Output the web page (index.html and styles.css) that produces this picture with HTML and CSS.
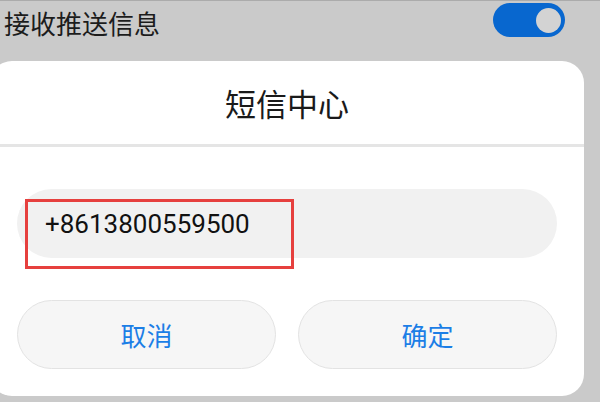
FILE: index.html
```html
<!DOCTYPE html>
<html lang="zh-CN">
	<head>
		<meta charset="utf-8">
		<title>短信中心</title>
		<link rel="stylesheet" href="styles.css">
	</head>
	<body>

		<div class="row">
			<span class="row-label">接收推送信息</span>
			<span class="switch on"><i class="knob"></i></span>
		</div>

		<div class="dialog">
			<div class="dialog-title">短信中心</div>
			<div class="dialog-body">
				<div class="field">
					<span class="field-text">+8613800559500</span>
					<span class="mark"></span>
				</div>
				<div class="actions">
					<a href="javascript:;" class="action">取消</a>
					<a href="javascript:;" class="action">确定</a>
				</div>
			</div>
		</div>

	</body>
</html>
```

FILE: styles.css
```css
html, body {
	height: 100%;
}
body {
	margin: 0;
	background-color: #cacaca;
	border-top: 1px solid #ababab;
	box-sizing: border-box;
	overflow: hidden;
	font-family: "Noto Sans CJK SC", "Noto Sans", sans-serif;
}
a {
	text-decoration: none;
}

/* settings row behind the dialog */
.row {
	height: 60px;
	display: flex;
	justify-content: space-between;
	align-items: flex-start;
	padding: 2px 35px 0 4px;
	box-sizing: border-box;
}
.row-label {
	font-size: 26px;
	line-height: 40px;
	color: #1c1c1c;
}
.switch {
	width: 72px;
	height: 34px;
	border-radius: 17px;
	background-color: #cfcfcf;
	display: flex;
	align-items: center;
	padding: 0 4px;
	box-sizing: border-box;
}
.switch.on {
	background-color: #0867cf;
	justify-content: flex-end;
}
.switch .knob {
	width: 25px;
	height: 25px;
	border-radius: 50%;
	background-color: #d3d3d3;
}

/* dialog */
.dialog {
	width: 594px;
	margin-left: -10px;
	background-color: #fff;
	border-radius: 22px;
}
.dialog-title {
	height: 83px;
	line-height: 83px;
	text-align: center;
	font-size: 31px;
	color: #1a1a1a;
	border-bottom: 3px solid #e5e5e5;
}
.dialog-body {
	padding: 42px 27px 27px;
	display: flex;
	flex-direction: column;
	gap: 42px;
}

.field {
	position: relative;
	height: 69px;
	border-radius: 35px;
	background-color: #f1f1f1;
	display: flex;
	align-items: center;
	padding-left: 28px;
}
.field-text {
	font-family: Roboto, "Noto Sans", sans-serif;
	font-size: 26px;
	color: #111;
}
/* red highlight frame over the number */
.mark {
	position: absolute;
	left: 8px;
	top: 10px;
	width: 269px;
	height: 70px;
	border: 3px solid #e6403e;
	box-sizing: border-box;
}

.actions {
	display: flex;
	gap: 22px;
}
.action {
	flex: 1;
	height: 69px;
	line-height: 67px;
	border-radius: 35px;
	border: 1px solid #e3e3e3;
	background-color: #f6f6f6;
	box-sizing: border-box;
	text-align: center;
	font-size: 26px;
	color: #1c7ee6;
}
```
